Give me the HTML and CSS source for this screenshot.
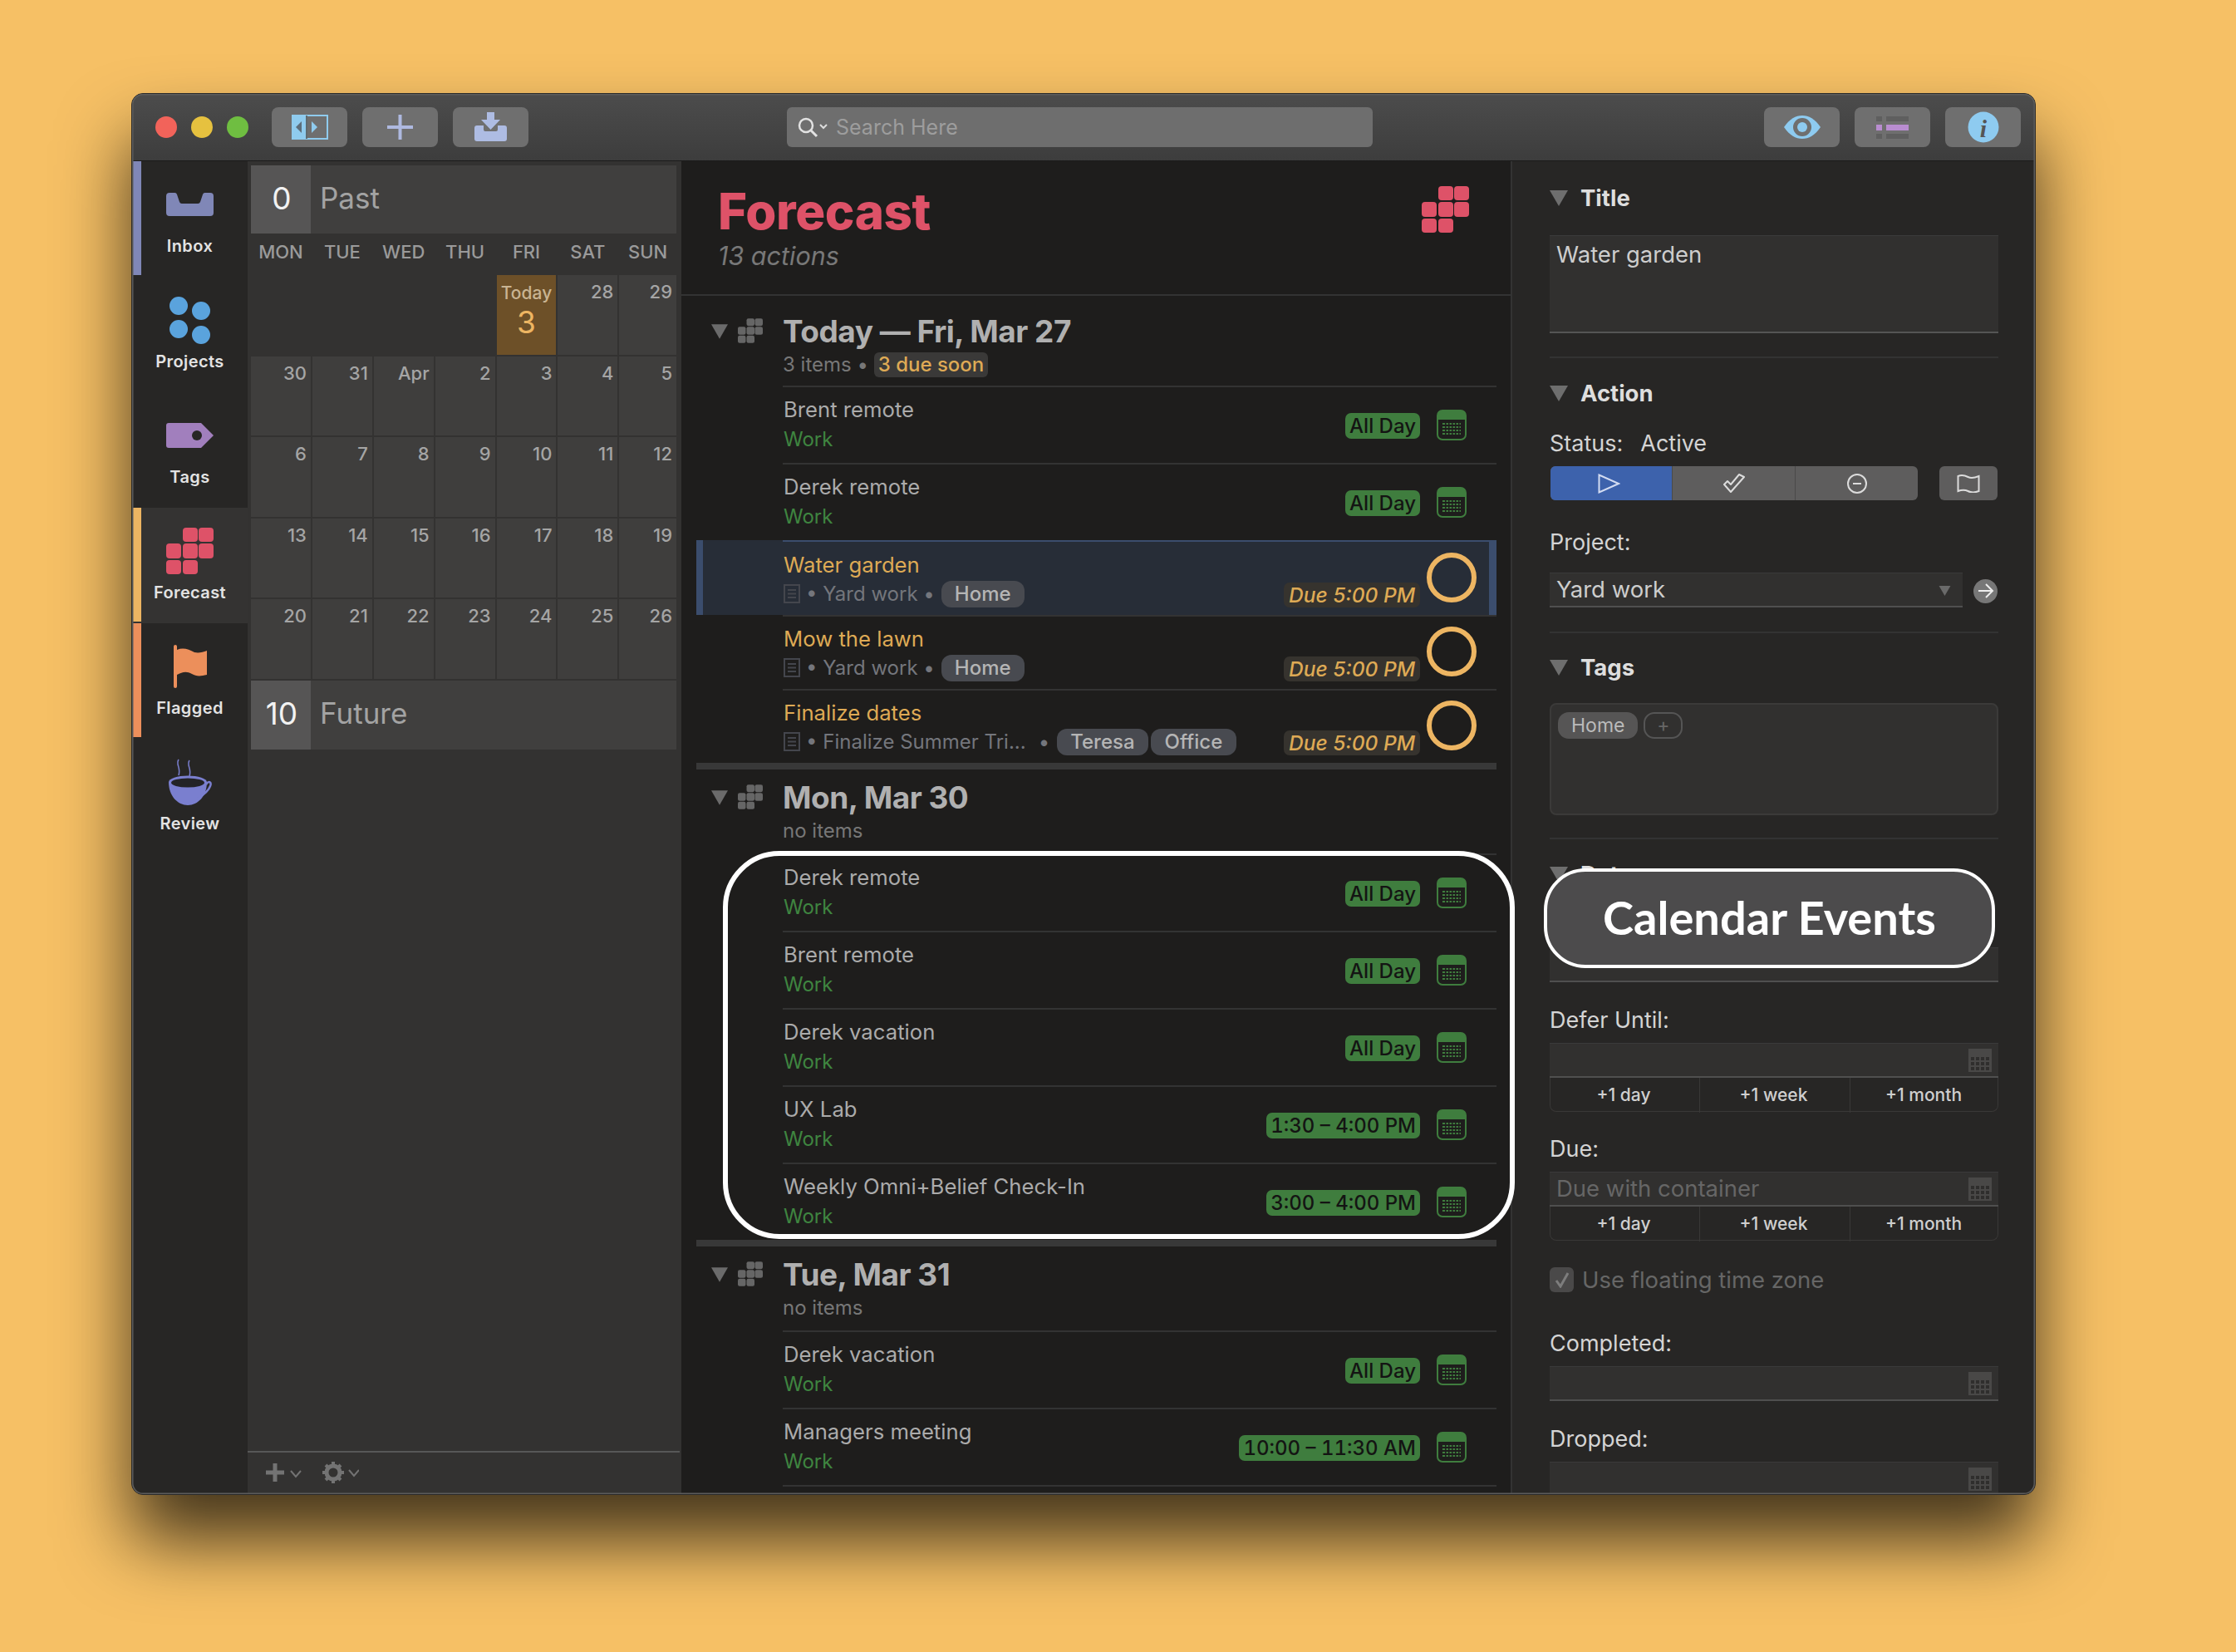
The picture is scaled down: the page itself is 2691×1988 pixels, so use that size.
FILE: index.html
```html
<!DOCTYPE html>
<html lang="en">
<head>
<meta charset="utf-8">
<title>Forecast</title>
<link rel="stylesheet" href="styles.css">
</head>
<body>
<svg class="defs" width="0" height="0" aria-hidden="true">
  <symbol id="grid" viewBox="0 0 57 56">
    <rect x="20" y="0" width="18" height="17" rx="4"/><rect x="39" y="0" width="18" height="17" rx="4"/>
    <rect x="0" y="19" width="18" height="18" rx="4"/><rect x="20" y="19" width="18" height="18" rx="4"/><rect x="39" y="19" width="18" height="18" rx="4"/>
    <rect x="0" y="39" width="18" height="17" rx="4"/><rect x="20" y="39" width="18" height="17" rx="4"/>
  </symbol>
  <symbol id="evt" viewBox="0 0 36 37">
    <rect x="1" y="1" width="34" height="35" rx="6" fill="none" stroke="#3f7d3e" stroke-width="2"/>
    <path d="M1 12V7a6 6 0 0 1 6-6h22a6 6 0 0 1 6 6v5z" fill="#3f7d3e"/>
    <g fill="#3f7d3e">
      <rect x="7" y="16" width="22" height="2"/><rect x="7" y="20" width="22" height="2"/><rect x="7" y="24" width="22" height="2"/><rect x="7" y="28" width="22" height="2"/>
    </g>
    <g fill="#1e1d1c">
      <rect x="10" y="15" width="1.5" height="16"/><rect x="14" y="15" width="1.5" height="16"/><rect x="18" y="15" width="1.5" height="16"/><rect x="22" y="15" width="1.5" height="16"/><rect x="26" y="15" width="1.5" height="16"/>
    </g>
  </symbol>
  <symbol id="fieldcal" viewBox="0 0 28 28">
    <rect width="28" height="28" fill="#494847"/>
    <g fill="#2f2e2d">
      <rect x="3" y="10" width="4" height="4"/><rect x="9" y="10" width="4" height="4"/><rect x="15" y="10" width="4" height="4"/><rect x="21" y="10" width="4" height="4"/>
      <rect x="3" y="16" width="4" height="4"/><rect x="9" y="16" width="4" height="4"/><rect x="15" y="16" width="4" height="4"/><rect x="21" y="16" width="4" height="4"/>
      <rect x="3" y="22" width="4" height="4"/><rect x="9" y="22" width="4" height="4"/><rect x="15" y="22" width="4" height="4"/><rect x="21" y="22" width="4" height="4"/>
    </g>
  </symbol>
  <symbol id="note" viewBox="0 0 20 23">
    <rect x="1" y="1" width="18" height="21" fill="none" stroke="currentColor" stroke-width="2"/>
    <path d="M5 7h10M5 11.500h10M5 16h10" stroke="currentColor" stroke-width="2"/>
  </symbol>
  <symbol id="tri" viewBox="0 0 22 19"><path d="M0 0H22L11 19Z"/></symbol>
</svg>

<main class="window">
  <header class="titlebar">
    <div class="lights"><span class="light red"></span><span class="light yellow"></span><span class="light green"></span></div>
    <div class="tbgroup first">
      <button class="tbtn"><svg width="44" height="30" viewBox="0 0 44 30"><rect x="1" y="1" width="42" height="28" fill="none" stroke="#8fcbee" stroke-width="2"/><rect x="0" y="0" width="17" height="30" fill="#8fcbee"/><rect x="17" y="1" width="2" height="28" fill="#5f6a70"/><path d="M12 8v14l-7-7z" fill="#5d6e7b"/><path d="M24 8v14l7-7z" fill="#8fcbee"/></svg></button>
      <button class="tbtn"><svg width="31" height="30" viewBox="0 0 31 30"><path d="M15.500 0v30M0 15h31" stroke="#aeb9e0" stroke-width="4"/></svg></button>
      <button class="tbtn"><svg width="39" height="35" viewBox="0 0 39 35"><path d="M3 16h8v5a2 2 0 0 0 2 2h13a2 2 0 0 0 2-2v-5h8a3 3 0 0 1 3 3v13a3 3 0 0 1-3 3H3a3 3 0 0 1-3-3V19a3 3 0 0 1 3-3z" fill="#aebce3"/><path d="M15 0h9v9h7L19.500 21 8 9h7z" fill="#aebce3"/></svg></button>
    </div>
    <div class="search">
      <svg width="36" height="26" viewBox="0 0 36 26"><circle cx="10" cy="11" r="8" fill="none" stroke="#e2e2e2" stroke-width="2.500"/><path d="M16 17l7 7" stroke="#e2e2e2" stroke-width="3"/><path d="M27 10l4 4 4-4" fill="none" stroke="#ddd" stroke-width="2"/></svg>
      <span>Search Here</span>
    </div>
    <div class="tbgroup right">
      <button class="tbtn"><svg width="44" height="28" viewBox="0 0 44 28"><path d="M0 14C7 4 14 0 22 0s15 4 22 14c-7 10-14 14-22 14S7 24 0 14z" fill="#8ecbf0"/><circle cx="22" cy="14" r="11" fill="#6f6f6f"/><circle cx="22" cy="14" r="6" fill="#8ecbf0"/></svg></button>
      <button class="tbtn"><svg width="39" height="30" viewBox="0 0 39 30"><g fill="#5f5f5f"><rect x="0" y="2" width="7" height="6"/><rect x="12" y="2" width="27" height="6"/><rect x="0" y="23" width="7" height="6"/><rect x="12" y="23" width="27" height="6"/></g><g fill="#b98dd0"><rect x="0" y="12" width="7" height="7"/><rect x="12" y="12" width="27" height="7"/></g></svg></button>
      <button class="tbtn"><svg width="38" height="38" viewBox="0 0 38 38"><circle cx="19" cy="19" r="18.500" fill="#8ecbf0"/><text class="info-i" x="19" y="31" text-anchor="middle">i</text></svg></button>
    </div>
  </header>

  <div class="body">
    <nav class="sidebar">
      <a class="nav inbox"><span class="slot"><svg width="57" height="28" viewBox="0 0 57 28"><path d="M0 4a4 4 0 0 1 4-4h6a3 3 0 0 1 3 2l3 9a3 3 0 0 0 3 2h19a3 3 0 0 0 3-2l3-9a3 3 0 0 1 3-2h6a4 4 0 0 1 4 4v20a4 4 0 0 1-4 4H4a4 4 0 0 1-4-4z" fill="#8087b7"/></svg></span><span class="nav-label">Inbox</span></a>
      <a class="nav"><span class="slot"><svg width="49" height="57" viewBox="0 0 49 57" fill="#5aa3dd"><circle cx="11" cy="11" r="11"/><circle cx="38" cy="17" r="11"/><circle cx="11" cy="39" r="11"/><circle cx="38" cy="46" r="11"/></svg></span><span class="nav-label">Projects</span></a>
      <a class="nav"><span class="slot"><svg width="57" height="30" viewBox="0 0 57 30"><path d="M3 0h39l15 15-15 15H3a3 3 0 0 1-3-3V3a3 3 0 0 1 3-3z" fill="#a17fbd"/><circle cx="37" cy="15" r="6" fill="#272625"/></svg></span><span class="nav-label">Tags</span></a>
      <a class="nav forecast"><span class="slot"><svg class="grid-red" width="57" height="56"><use href="#grid"/></svg></span><span class="nav-label">Forecast</span></a>
      <a class="nav flagged"><span class="slot"><svg width="40" height="52" viewBox="0 0 40 52"><rect x="0" y="0" width="4" height="52" rx="2" fill="#ec8f5b"/><path d="M4 6c7-3 14-1 21 3 5 1 10 0 15-2v29c-8 2-13 2-18-1-7-4-12-2-18 1z" fill="#ec8f5b"/></svg></span><span class="nav-label">Flagged</span></a>
      <a class="nav"><span class="slot"><svg width="53" height="56" viewBox="0 0 53 56"><path d="M13 1c-4 6 3 9 0 19M26 2c-4 6 3 9 0 19" fill="none" stroke="#7a7fcf" stroke-width="1.500"/><path d="M1 28c0 17 11 28 23 28s23-11 23-28z" fill="#7a7fcf"/><ellipse cx="24" cy="28" rx="23" ry="7.500" fill="#7a7fcf"/><ellipse cx="24" cy="29" rx="20" ry="5.500" fill="#232326"/><path d="M46 31c3-5 7-3 5 2-2 6-9 11-15 15" fill="none" stroke="#7a7fcf" stroke-width="2.500"/></svg></span><span class="nav-label">Review</span></a>
    </nav>

    <section class="calendar">
      <div class="cal-band"><span class="cal-count">0</span><span class="cal-name">Past</span></div>
      <div class="weekdays"><span>MON</span><span>TUE</span><span>WED</span><span>THU</span><span>FRI</span><span>SAT</span><span>SUN</span></div>
      <div class="month">
        <span class="blank"></span><span class="blank"></span><span class="blank"></span><span class="blank"></span>
        <span class="today"><small>Today</small><b>3</b></span><span class="day">28</span><span class="day">29</span>
        <span class="day">30</span><span class="day">31</span><span class="day">Apr</span><span class="day">2</span><span class="day">3</span><span class="day">4</span><span class="day">5</span>
        <span class="day">6</span><span class="day">7</span><span class="day">8</span><span class="day">9</span><span class="day">10</span><span class="day">11</span><span class="day">12</span>
        <span class="day">13</span><span class="day">14</span><span class="day">15</span><span class="day">16</span><span class="day">17</span><span class="day">18</span><span class="day">19</span>
        <span class="day">20</span><span class="day">21</span><span class="day">22</span><span class="day">23</span><span class="day">24</span><span class="day">25</span><span class="day">26</span>
      </div>
      <div class="cal-band future"><span class="cal-count">10</span><span class="cal-name">Future</span></div>
      <footer class="cal-foot">
        <svg width="43" height="22" viewBox="0 0 43 22"><path d="M11 0v22M0 11h22" stroke="#737373" stroke-width="5"/><path d="M30 9l6 7 6-7" fill="none" stroke="#737373" stroke-width="2"/></svg>
        <svg width="44" height="26" viewBox="0 0 44 26"><circle cx="13" cy="13" r="8" fill="none" stroke="#737373" stroke-width="5"/><path d="M13 0v26M0 13h26M4 4l18 18M22 4L4 22" stroke="#737373" stroke-width="4" stroke-dasharray="5 16"/><path d="M32 10l6 7 6-7" fill="none" stroke="#737373" stroke-width="2"/></svg>
      </footer>
    </section>

    <section class="list">
      <header class="list-head">
        <div><h1>Forecast</h1><p>13 actions</p></div>
        <svg class="grid-red" width="57" height="58"><use href="#grid"/></svg>
      </header>

      <div class="group-head first-group">
        <svg class="tri-s" width="20" height="18"><use href="#tri"/></svg>
        <svg class="grid-s" width="30" height="30"><use href="#grid"/></svg>
        <div><h2>Today — Fri, Mar 27</h2><p class="group-sub">3 items • <span class="soon">3 due soon</span></p></div>
      </div>
      <div class="row"><div class="row-text"><div class="r-title">Brent remote</div><div class="r-work">Work</div></div><div class="meta"><span class="pill">All Day</span><svg width="36" height="37"><use href="#evt"/></svg></div></div>
      <div class="row"><div class="row-text"><div class="r-title">Derek remote</div><div class="r-work">Work</div></div><div class="meta"><span class="pill">All Day</span><svg width="36" height="37"><use href="#evt"/></svg></div></div>

      <div class="row task selected"><div class="row-text"><div class="r-title">Water garden</div><div class="r-sub"><svg width="20" height="23"><use href="#note"/></svg><span>• Yard work •</span><span class="ctag">Home</span></div></div><div class="meta task-meta"><span class="due">Due 5:00 PM</span><span class="ring"></span></div></div>
      <div class="row task"><div class="row-text"><div class="r-title">Mow the lawn</div><div class="r-sub"><svg width="20" height="23"><use href="#note"/></svg><span>• Yard work •</span><span class="ctag">Home</span></div></div><div class="meta task-meta"><span class="due">Due 5:00 PM</span><span class="ring"></span></div></div>
      <div class="row task"><div class="row-text"><div class="r-title">Finalize dates</div><div class="r-sub"><svg width="20" height="23"><use href="#note"/></svg><span>• Finalize Summer Tri...</span><span class="dot">•</span><span class="ctag">Teresa</span><span class="ctag next">Office</span></div></div><div class="meta task-meta"><span class="due">Due 5:00 PM</span><span class="ring"></span></div></div>
      <div class="thick"></div>

      <div class="group-head">
        <svg class="tri-s" width="20" height="18"><use href="#tri"/></svg>
        <svg class="grid-s" width="30" height="30"><use href="#grid"/></svg>
        <div><h2>Mon, Mar 30</h2><p class="group-sub">no items</p></div>
      </div>
      <div class="row"><div class="row-text"><div class="r-title">Derek remote</div><div class="r-work">Work</div></div><div class="meta"><span class="pill">All Day</span><svg width="36" height="37"><use href="#evt"/></svg></div></div>
      <div class="row"><div class="row-text"><div class="r-title">Brent remote</div><div class="r-work">Work</div></div><div class="meta"><span class="pill">All Day</span><svg width="36" height="37"><use href="#evt"/></svg></div></div>
      <div class="row"><div class="row-text"><div class="r-title">Derek vacation</div><div class="r-work">Work</div></div><div class="meta"><span class="pill">All Day</span><svg width="36" height="37"><use href="#evt"/></svg></div></div>
      <div class="row"><div class="row-text"><div class="r-title">UX Lab</div><div class="r-work">Work</div></div><div class="meta"><span class="pill">1:30 – 4:00 PM</span><svg width="36" height="37"><use href="#evt"/></svg></div></div>
      <div class="row"><div class="row-text"><div class="r-title">Weekly Omni+Belief Check-In</div><div class="r-work">Work</div></div><div class="meta"><span class="pill">3:00 – 4:00 PM</span><svg width="36" height="37"><use href="#evt"/></svg></div></div>
      <div class="thick"></div>

      <div class="group-head">
        <svg class="tri-s" width="20" height="18"><use href="#tri"/></svg>
        <svg class="grid-s" width="30" height="30"><use href="#grid"/></svg>
        <div><h2>Tue, Mar 31</h2><p class="group-sub">no items</p></div>
      </div>
      <div class="row"><div class="row-text"><div class="r-title">Derek vacation</div><div class="r-work">Work</div></div><div class="meta"><span class="pill">All Day</span><svg width="36" height="37"><use href="#evt"/></svg></div></div>
      <div class="row"><div class="row-text"><div class="r-title">Managers meeting</div><div class="r-work">Work</div></div><div class="meta"><span class="pill">10:00 – 11:30 AM</span><svg width="36" height="37"><use href="#evt"/></svg></div></div>
      <div class="row"></div>
    </section>

    <aside class="inspector">
      <h3 class="ins-head h-title"><svg class="tri-i" width="22" height="19"><use href="#tri"/></svg>Title</h3>
      <div class="textarea">Water garden</div>
      <hr class="rule r1">
      <h3 class="ins-head h-action"><svg class="tri-i" width="22" height="19"><use href="#tri"/></svg>Action</h3>
      <div class="lbl status"><span>Status:</span><span>Active</span></div>
      <div class="status-row">
        <div class="seg">
          <span class="seg-item on"><svg width="27" height="24" viewBox="0 0 27 24"><path d="M1.500 1.500v21L25 12z" fill="none" stroke="#d3dcf2" stroke-width="2"/></svg></span>
          <span class="seg-item"><svg width="28" height="24" viewBox="0 0 28 24"><path d="M2 13l8 9L26 4l-6-3-10 12-4-4z" fill="none" stroke="#dcdcdc" stroke-width="2" stroke-linejoin="round"/></svg></span>
          <span class="seg-item"><svg width="24" height="24" viewBox="0 0 24 24"><circle cx="12" cy="12" r="11" fill="none" stroke="#dcdcdc" stroke-width="2"/><path d="M7 12h10" stroke="#dcdcdc" stroke-width="2"/></svg></span>
        </div>
        <span class="flagbtn"><svg width="28" height="22" viewBox="0 0 28 22"><path d="M1.500 2c5-2 8-1 12 1s8 1 13-1v18c-5 2-9 2-13 0s-7-2-12 0z" fill="none" stroke="#dcdcdc" stroke-width="2"/></svg></span>
      </div>
      <div class="lbl l-project">Project:</div>
      <div class="project-row">
        <div class="field select">Yard work<svg class="sel-tri" width="15" height="12"><use href="#tri"/></svg></div>
        <span class="go"><svg width="20" height="20" viewBox="0 0 20 20"><path d="M1 10h16M10 2l8 8-8 8" fill="none" stroke="#eee" stroke-width="2"/></svg></span>
      </div>
      <hr class="rule r2">
      <h3 class="ins-head h-tags"><svg class="tri-i" width="22" height="19"><use href="#tri"/></svg>Tags</h3>
      <div class="tagbox"><span class="tag">Home</span><span class="tagadd">+</span></div>
      <hr class="rule r3">
      <h3 class="ins-head h-dates"><svg class="tri-i" width="22" height="19"><use href="#tri"/></svg>Dates</h3>
      <div class="field plain f-plan"></div>
      <div class="lbl l-defer">Defer Until:</div>
      <div class="field f-tight"><svg class="fcal" width="28" height="28"><use href="#fieldcal"/></svg></div>
      <div class="steps"><span>+1 day</span><span>+1 week</span><span>+1 month</span></div>
      <div class="lbl l-due">Due:</div>
      <div class="field f-tight ph">Due with container<svg class="fcal" width="28" height="28"><use href="#fieldcal"/></svg></div>
      <div class="steps"><span>+1 day</span><span>+1 week</span><span>+1 month</span></div>
      <div class="check"><span class="box"><svg width="18" height="20" viewBox="0 0 18 20"><path d="M2 11l5 7L16 2" fill="none" stroke="#7d7d7d" stroke-width="3"/></svg></span>Use floating time zone</div>
      <div class="lbl l-completed">Completed:</div>
      <div class="field f-tight"><svg class="fcal" width="28" height="28"><use href="#fieldcal"/></svg></div>
      <div class="lbl l-dropped">Dropped:</div>
      <div class="field f-tight"><svg class="fcal" width="28" height="28"><use href="#fieldcal"/></svg></div>
    </aside>
  </div>

  <div class="highlight"></div>
  <div class="callout">Calendar Events</div>
</main>
</body>
</html>
```

FILE: styles.css
```css
*, *::before, *::after { box-sizing: border-box; }
html, body { margin: 0; height: 100%; }
body {
  width: 2691px; height: 1988px; overflow: hidden;
  padding: 112px 0 0 158px;
  background: #f6c065;
  font-family: Inter, "Liberation Sans", sans-serif;
}
.defs { position: absolute; }
h1, h2, h3, p { margin: 0; }

.window {
  position: relative; width: 2292px; height: 1687px;
  display: flex; flex-direction: column; overflow: visible;
  border: 1px solid #2a2a2a; border-radius: 14px;
  background: #272625;
  box-shadow: 0 55px 85px rgba(0,0,0,.72);
}
.window::after {
  content: ""; position: absolute; inset: 0; border-radius: 13px;
  box-shadow: inset 0 0 0 1.5px #5c5c5c; pointer-events: none;
}

.titlebar {
  height: 81px; flex: none; display: flex; align-items: center;
  padding: 0 17px 1px 28px;
  background: linear-gradient(#4c4c4c, #3d3d3d);
  border-bottom: 1px solid #1b1b1b;
  border-radius: 13px 13px 0 0;
}
.lights { display: flex; gap: 17px; }
.light { width: 26px; height: 26px; border-radius: 50%; }
.red { background: #f2635a; } .yellow { background: #e6c13f; } .green { background: #6fbe41; }
.tbgroup { display: flex; gap: 18px; }
.tbgroup.first { margin-left: 28px; }
.tbgroup.right { margin-left: auto; }
.tbtn {
  width: 91px; height: 48px; padding: 0; border: 0; border-radius: 8px;
  background: #6f6f6f; display: flex; align-items: center; justify-content: center;
}
.info-i { font: italic bold 30px "Liberation Serif", serif; fill: #555; }
.search {
  margin-left: 311px; width: 705px; height: 48px; border-radius: 6px;
  background: #6e6e6e; display: flex; align-items: center; gap: 10px; padding-left: 13px;
  color: #9d9d9d; font-size: 25px;
}

.body { flex: 1; min-height: 0; display: flex; overflow: hidden; border-radius: 0 0 13px 13px; }

.sidebar { width: 139px; flex: none; background: #272625; }
.nav {
  position: relative; height: 139px; display: flex; flex-direction: column; align-items: center;
  padding-top: 22px;
}
.nav::before { content: ""; position: absolute; left: 0; top: 0; bottom: 2px; width: 11px; }
.inbox::before { background: #8087b7; }
.forecast { background: #343332; }
.forecast::before { background: #edb562; }
.flagged::before { background: #ec8f5b; }
.slot { height: 60px; display: flex; align-items: center; justify-content: center; }
.nav-label { margin-top: 8px; font-size: 20px; line-height: 24px; font-weight: 600; color: #e3e3e3; letter-spacing: .4px; }
.grid-red { fill: #de5268; }

.calendar {
  width: 522px; flex: none; display: flex; flex-direction: column;
  background: #333231; padding: 5px 0 0 4px;
}
.cal-band { width: 512px; height: 82px; flex: none; display: flex; background: #403f3e; }
.cal-band.future { height: 83px; margin-top: 2px; }
.cal-count {
  width: 72px; background: #565555; color: #f2f2f2; font-size: 37px; padding: 0 0 3px 2px;
  display: flex; align-items: center; justify-content: center;
}
.cal-name { margin-left: 11px; color: #a3a3a3; font-size: 35px; padding-bottom: 4px; display: flex; align-items: center; }
.weekdays {
  width: 512px; height: 50px; flex: none; display: grid; grid-template-columns: repeat(6, 71.900px) 1fr; column-gap: 2px;
  align-items: center; text-align: center; color: #9a9a9a; font-size: 22px; font-weight: 500; padding: 0 0 6px;
}
.month { width: 512px; flex: none; display: grid; grid-template-columns: repeat(6, 71.900px) 1fr; grid-auto-rows: 95.5px; gap: 2px; }
.day { background: #3f3e3d; color: #a5a5a5; font-size: 22px; font-weight: 500; line-height: 40px; text-align: right; padding-right: 5px; }
.today { background: #6d5028; display: flex; flex-direction: column; align-items: center; }
.today small { margin-top: 9px; font-size: 21px; line-height: 26px; font-weight: 500; color: #c9b492; }
.today b { margin-top: 1px; font-size: 37px; line-height: 42px; font-weight: 400; color: #edb562; }
.cal-foot {
  margin-top: auto; margin-left: -4px; margin-right: 2px; height: 52px; flex: none;
  border-top: 2px solid #575757; display: flex; align-items: center; gap: 25px; padding: 0 0 2px 22px;
}

.list { width: 1000px; flex: none; background: #1e1d1c; border-right: 2px solid #333; overflow: hidden; }
.list-head {
  height: 162px; padding: 25px 50px 0 45px; border-bottom: 2px solid #333;
  display: flex; justify-content: space-between; align-items: flex-start;
}
.list-head .grid-red { margin-top: 4px; }
.list-head h1 { font-size: 60px; line-height: 70px; font-weight: 800; color: #de5268; letter-spacing: -.4px; margin-left: -1px; }
.list-head p { margin-top: 1px; margin-left: -1px; font-size: 30.500px; line-height: 36px; font-style: italic; color: #787878; }
.group-head { height: 101px; display: flex; align-items: flex-start; padding: 12px 0 0 36px; }
.first-group { height: 108px; padding-top: 21px; }
.tri-s { fill: #6b6b6b; margin-top: 13px; flex: none; }
.grid-s { fill: #666; margin: 6px 24px 0 12px; flex: none; }
.group-head h2 { font-size: 37px; line-height: 44px; font-weight: 700; color: #b0b0b0; letter-spacing: -.5px; }
.group-sub { margin-top: 2px; font-size: 24px; line-height: 32px; color: #777; }
.soon { display: inline-block; padding: 0 5px; height: 30px; line-height: 29px; border-radius: 6px; background: #3a3938; color: #deaa55; font-weight: 500; }

.row {
  position: relative; height: 93px; margin: 0 17px 0 122px; border-top: 2px solid #333;
  display: flex; justify-content: space-between;
}
.row-text { position: relative; padding: 9px 0 0 1px; }
.r-title { font-size: 25.700px; line-height: 35px; color: #ababab; }
.r-work { margin-top: 1px; font-size: 24px; line-height: 35px; color: #3f8540; }
.meta { align-self: center; display: flex; align-items: center; gap: 20px; padding-right: 36px; }
.pill { height: 31px; line-height: 31px; padding: 0 5px; border-radius: 7px; background: #3f7d3e; color: #141413; font-size: 24px; font-weight: 500; margin-top: 2px; white-space: nowrap; font-variant-numeric: tabular-nums; }
.task { height: 89px; }
.task .row-text { padding-top: 9px; }
.task .r-title { color: #deaa55; }
.r-sub { display: flex; align-items: center; height: 35px; font-size: 24px; color: #74767c; }
.r-sub svg { color: #44464d; margin-right: 7px; }
.ctag { height: 32px; line-height: 32px; padding: 0 16px; margin-left: 8px; border-radius: 12px; background: #484a50; color: #b5b5b5; font-size: 24px; font-weight: 500; }
.ctag.next { margin-left: 3px; padding: 0 17px; }
.dot { margin-left: 15px; margin-right: 1px; }
.task-meta { gap: 8px; padding-right: 24px; align-self: stretch; align-items: flex-start; }
.due { margin-top: 48px; height: 30px; line-height: 30px; padding: 0 6px; border-radius: 7px; background: #36332e; color: #deaa55; font-size: 24.500px; font-style: italic; font-weight: 500; white-space: nowrap; }
.ring { margin-top: 12px; width: 60px; height: 60px; border-radius: 50%; border: 6px solid #edb562; }
.selected { background: #272d37; border-top-color: #3b4d6d; height: 90px; }
.selected .row-text { padding-top: 10px; }
.selected .due { margin-top: 49px; }
.selected .ring { margin-top: 13px; }
.selected::before { content: ""; position: absolute; left: -104px; top: -2px; bottom: 0; width: 104px; background: #272d37; border-left: 8px solid #3b4d6d; }
.selected::after { content: ""; position: absolute; right: 0; top: 0; bottom: 0; width: 9px; background: #3b4d6d; }
.thick { height: 8px; margin: 0 17px 0 18px; background: #383838; }

.inspector { flex: 1; min-width: 0; background: #272625; padding: 26px 44px 0 45px; overflow: hidden; }
.ins-head { display: flex; align-items: center; height: 36px; font-size: 27.500px; font-weight: 700; color: #dedede; }
.tri-i { fill: #6e6e6e; margin-right: 15px; flex: none; }
.textarea { margin-top: 27px; height: 118px; background: #31302f; border-top: 1px solid #3a3a3a; border-bottom: 2px solid #555; padding: 4px 8px; font-size: 27.500px; line-height: 36px; color: #cdcdcd; }
.rule { border: 0; height: 2px; background: #333; margin: 0; }
.r1 { margin-top: 28px; } .r2 { margin-top: 29px; } .r3 { margin-top: 27px; }
.h-action { margin-top: 24px; } .h-tags { margin-top: 23px; } .h-dates { margin-top: 24px; }
.lbl { height: 34px; line-height: 34px; font-size: 27px; color: #d4d4d4; }
.status { margin-top: 26px; display: flex; gap: 21px; }
.status-row { margin-top: 10px; height: 41px; display: flex; justify-content: space-between; }
.seg { width: 442px; margin-left: 1px; display: flex; border-radius: 6px; overflow: hidden; background: #5e5d5d; }
.seg-item { flex: 1; display: flex; align-items: center; justify-content: center; border-left: 1px solid #4a4a4a; }
.seg-item:first-child { flex: 0 0 146px; border-left: 0; padding-right: 6px; }
.seg-item.on { background: #3d62ac; }
.flagbtn { width: 70px; margin-right: 1px; border-radius: 6px; background: #5e5d5d; display: flex; align-items: center; justify-content: center; }
.l-project { margin-top: 34px; }
.project-row { margin-top: 19px; display: flex; align-items: center; justify-content: space-between; }
.go { margin-top: 2px; }
.field {
  position: relative; height: 42px; background: #31302f; border-top: 1px solid #3a3a3a; border-bottom: 2px solid #4f4f4f;
  padding-left: 8px; font-size: 27.500px; line-height: 39px; color: #cdcdcd;
}
.select { width: 497px; }
.sel-tri { position: absolute; right: 14px; top: 15px; fill: #6a6a6a; }
.go { width: 29px; height: 29px; margin-right: 1px; border-radius: 50%; background: #777; display: flex; align-items: center; justify-content: center; }
.tagbox { margin-top: 25px; height: 135px; border: 2px solid #3b3a39; border-radius: 8px; background: #31302f; padding: 9px 8px; display: flex; align-items: flex-start; gap: 7px; }
.tag { height: 32px; line-height: 32px; padding: 0 16px; border-radius: 13px; background: #565555; color: #bbb; font-size: 23px; }
.tagadd { width: 47px; height: 32px; line-height: 28px; text-align: center; border: 2px solid #555; border-radius: 13px; color: #666; font-size: 23px; }
.f-plan { margin-top: 70px; }
.l-defer { margin-top: 29px; }
.l-due { margin-top: 28px; }
.f-tight { margin-top: 10px; }
.ph { color: #666; }
.fcal { position: absolute; right: 8px; top: 6px; }
.steps { height: 41px; display: grid; grid-template-columns: 179px 181px 180px; border: 1px solid #393837; border-top: 0; border-radius: 0 0 8px 8px; text-align: center; font-size: 21px; line-height: 42px; color: #cfcfcf; font-weight: 500; }
.steps span { padding-right: 3px; }
.steps span + span { border-left: 1px solid #393837; }
.check { margin-top: 32px; height: 30px; display: flex; align-items: center; gap: 10px; font-size: 27.500px; color: #666; }
.box { width: 29px; height: 30px; border-radius: 6px; background: #4a4949; display: flex; align-items: center; justify-content: center; }
.l-completed { margin-top: 45px; }
.l-dropped { margin-top: 29px; }

.highlight { position: absolute; left: 711px; top: 911px; width: 953px; height: 467px; border: 6px solid #fff; border-radius: 68px; pointer-events: none; }
.callout {
  position: absolute; left: 1699px; top: 932px; width: 543px; height: 120px;
  border: 4px solid #fff; border-radius: 50px; background: #4c4b4c;
  display: flex; align-items: center; justify-content: center; padding-bottom: 3px;
  font-family: Lato, Inter, sans-serif; font-size: 56px; font-weight: 700; color: #fff;
}
```
